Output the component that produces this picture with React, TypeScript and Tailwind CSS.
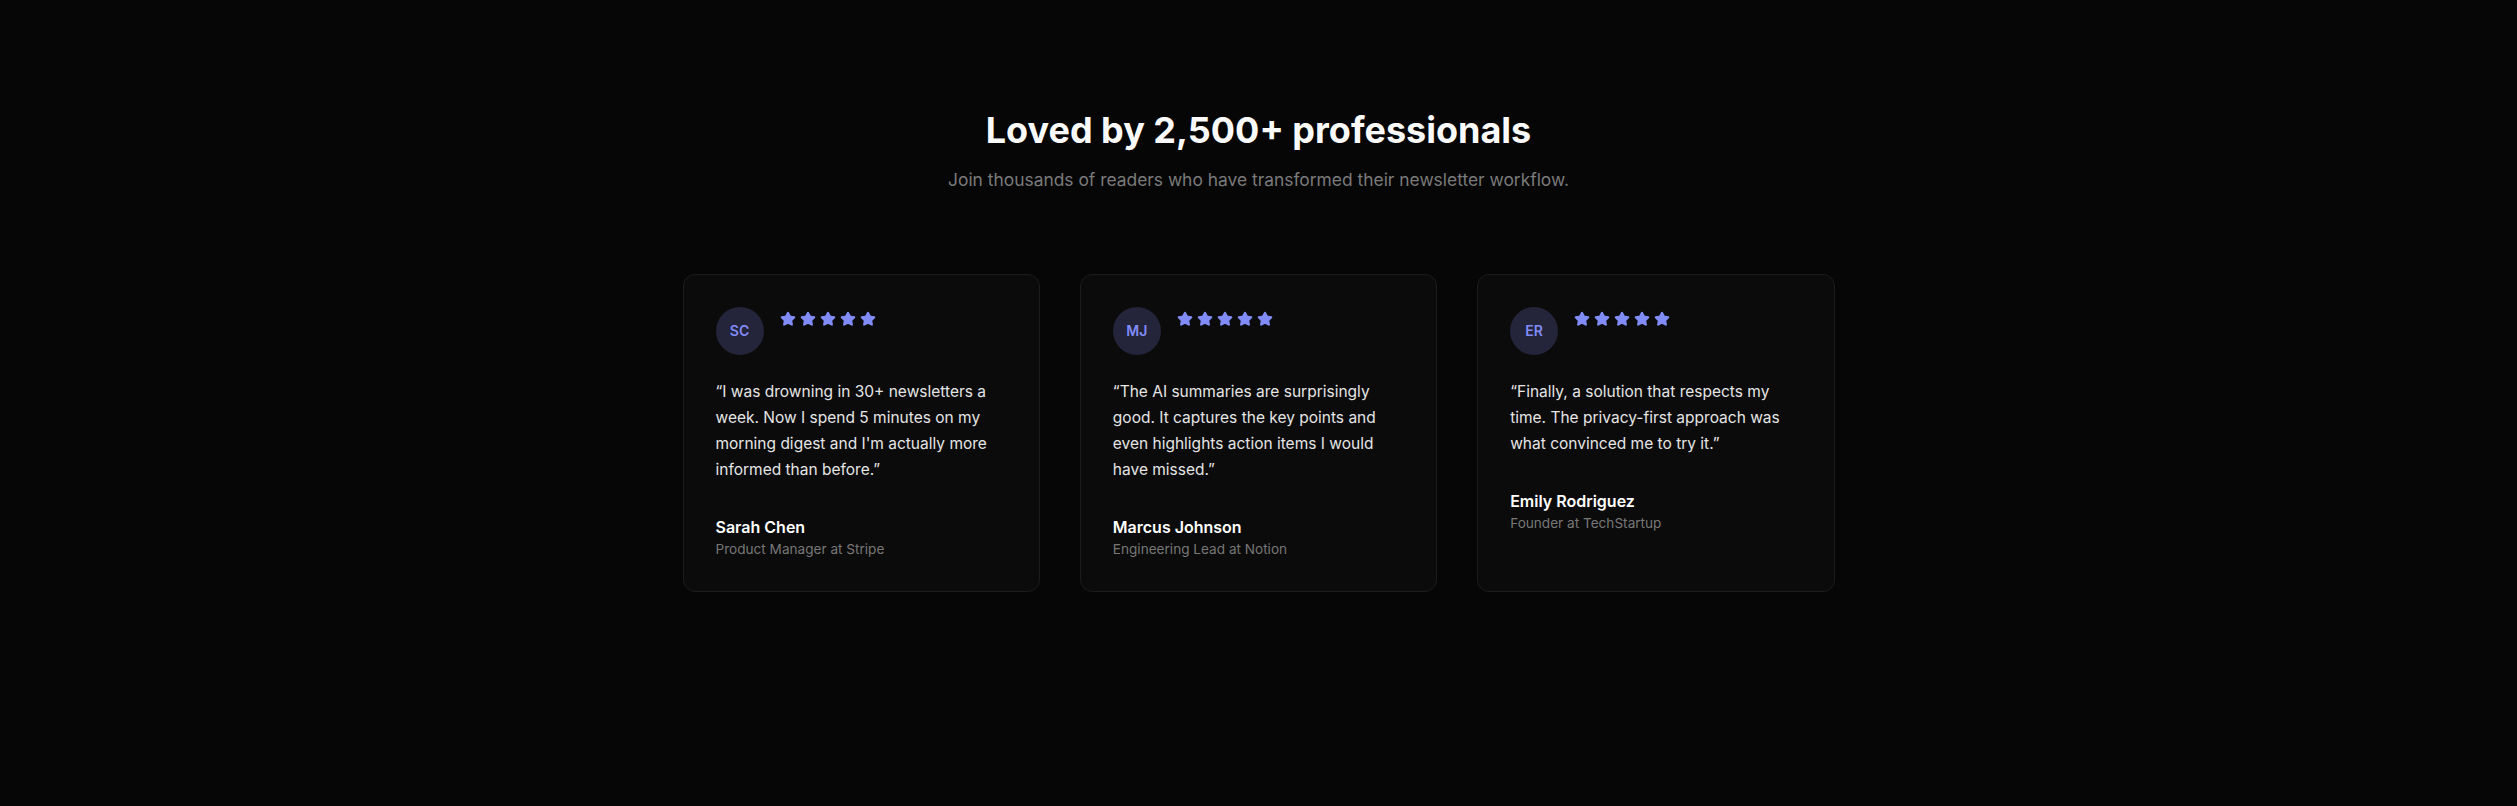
import React from "react";
import { Star } from "lucide-react";

const testimonials = [
  {
    initials: "SC",
    quote:
      "\u201CI was drowning in 30+ newsletters a week. Now I spend 5 minutes on my morning digest and I'm actually more informed than before.\u201D",
    name: "Sarah Chen",
    role: "Product Manager at Stripe",
  },
  {
    initials: "MJ",
    quote:
      "\u201CThe AI summaries are surprisingly good. It captures the key points and even highlights action items I would have missed.\u201D",
    name: "Marcus Johnson",
    role: "Engineering Lead at Notion",
  },
  {
    initials: "ER",
    quote:
      "\u201CFinally, a solution that respects my time. The privacy-first approach was what convinced me to try it.\u201D",
    name: "Emily Rodriguez",
    role: "Founder at TechStartup",
  },
];

export default function App() {
  return (
    <div
      className="min-h-screen bg-[#060606] text-white"
      style={{ fontFamily: "Inter, 'Noto Sans', sans-serif" }}
    >
      <section className="pt-[110px] pb-24 px-6">
        <div className="mx-auto max-w-6xl">
          <div className="text-center mb-20">
            <h2 className="text-4xl font-bold text-[#fafafa] mb-4">
              Loved by 2,500+ professionals
            </h2>
            <p className="text-[17.4px] leading-7 text-[#7a7a7a]">
              Join thousands of readers who have transformed their newsletter workflow.
            </p>
          </div>
          <div className="grid grid-cols-3 gap-10">
            {testimonials.map((t) => (
              <div
                key={t.name}
                className="rounded-xl border border-[#1c1c1c] bg-[#0b0b0b] p-8"
              >
                <div className="flex items-start gap-4 mb-6">
                  <div className="flex h-12 w-12 items-center justify-center rounded-full bg-[#24243a] text-sm font-semibold text-[#818cf8]">
                    {t.initials}
                  </div>
                  <div className="mt-1 flex gap-1">
                    {[0, 1, 2, 3, 4].map((i) => (
                      <Star
                        key={i}
                        className="h-4 w-4 text-[#818cf8]"
                        fill="currentColor"
                      />
                    ))}
                  </div>
                </div>
                <p className="mb-8 text-[15.5px] leading-[26px] text-[#e5e5e5]">
                  {t.quote}
                </p>
                <div>
                  <div className="text-base font-semibold text-white">{t.name}</div>
                  <div className="text-[13.6px] leading-5 text-[#777777]">{t.role}</div>
                </div>
              </div>
            ))}
          </div>
        </div>
      </section>
    </div>
  );
}
